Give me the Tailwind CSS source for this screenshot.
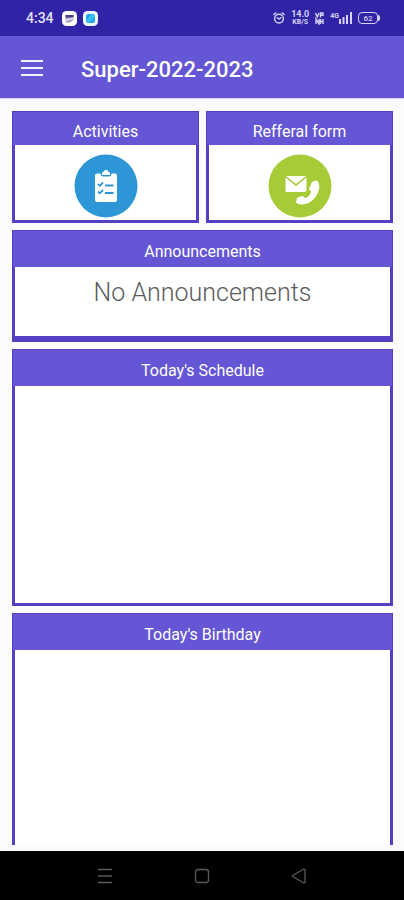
<!DOCTYPE html>
<html lang="en">
<head>
<meta charset="utf-8">
<meta name="viewport" content="width=device-width, initial-scale=1">
<title>Super-2022-2023</title>
<script src="https://cdn.jsdelivr.net/npm/@tailwindcss/browser@4"></script>
</head>
<body class="flex min-h-screen flex-col bg-[#fbfbfd] font-[Roboto,sans-serif] text-white">
  <!-- Status bar -->
  <div class="flex h-9 items-center justify-between bg-[#3023a6] pr-6 pl-[26px]">
    <div class="flex items-center gap-2">
      <span class="w-7 text-[14px] leading-4 font-medium text-[#e4e2f8]">4:34</span>
      <div class="flex gap-1.5">
        <svg class="size-[15px]" viewBox="0 0 15 15" aria-hidden="true"><rect width="15" height="15" rx="4.5" fill="#fff"/><path d="M3.500 4h8v4.500l-3 3h-5z" fill="#a9a5c8"/><path d="M3.500 4h8v2.500h-8z" fill="#4b427f"/><path d="M3.500 9.500l8-2.500" stroke="#fff" stroke-width="1"/></svg>
        <svg class="size-[15px]" viewBox="0 0 15 15" aria-hidden="true"><rect width="15" height="15" rx="4.500" fill="#f2fbff"/><rect x="3" y="3" width="9" height="9" rx="2.500" fill="#20a5ec"/><path d="M3 9l6-6h.5A2.500 2.500 0 0 1 12 5.500L5.500 12A2.500 2.500 0 0 1 3 9.500z" fill="#35c1f5"/></svg>
      </div>
    </div>
    <div class="flex items-center gap-1.5 text-[#d5d2f6]">
      <svg class="size-3" viewBox="0 0 12 12" fill="none" stroke="currentColor" stroke-width="1.400" stroke-linecap="round" aria-hidden="true"><circle cx="6" cy="6.600" r="4.400"/><path d="M.8 2.500 2.800.9M11.200 2.500 9.200.9M4.300 5.700 6 7.200l2-1.500"/></svg>
      <div class="flex w-[18px] flex-col items-center font-bold">
        <span class="text-[9px] leading-[9px]">14.0</span>
        <span class="text-[7px] leading-[7px]">KB/S</span>
      </div>
      <svg class="h-[13px] w-[9px]" viewBox="0 0 9 13" fill="none" stroke="currentColor" stroke-width="1.400" aria-hidden="true"><path d="M.6 1l1.700 4L4 1M5.500 5.500V1h2.500v2.200H5.500M1 12V7l3 5V7M5.500 7v5M8 7v5M5.500 9.500H8"/></svg>
      <div class="flex items-end">
        <span class="self-start text-[7px] leading-[8px] font-bold">4G</span>
        <svg class="h-3 w-[13px]" viewBox="0 0 13 12" fill="currentColor" aria-hidden="true"><path d="M0 7h2v5H0zM3.500 5h2v7h-2zM7 3h2v9H7zM11 0h2v12h-2z"/></svg>
      </div>
      <div class="flex items-center">
        <span class="flex h-3 w-[20px] items-center justify-center rounded border border-[#d5d2f6] text-[8px] leading-[9px] font-medium">62</span>
        <span class="h-1.5 w-0.5 rounded-r bg-[#d5d2f6]"></span>
      </div>
    </div>
  </div>

  <!-- App bar -->
  <header class="flex h-[62px] items-center gap-[38px] bg-[#6456d4] pl-[21px]">
    <button type="button" aria-label="Open menu" class="flex w-[22px] flex-col gap-[5px] pt-1 pb-[3px]">
      <span class="h-[2px] w-full bg-[#f4f3fd]"></span>
      <span class="h-[2px] w-full bg-[#f4f3fd]"></span>
      <span class="h-[2px] w-full bg-[#f4f3fd]"></span>
    </button>
    <h1 class="pt-1.5 text-[22px] leading-7 font-medium">Super-2022-2023</h1>
  </header>
  <div class="h-px bg-[#dcd9f6]"></div>

  <main class="flex flex-1 flex-col gap-[7px] pt-3 pr-[11px] pb-1.5 pl-3">
    <div class="grid grid-cols-2 gap-[7px]">
      <a href="#activities" class="flex h-28 flex-col border-3 border-[#5340c2] bg-white">
        <h2 class="-mx-0.5 -mt-0.5 flex h-[33px] items-center justify-center bg-[#6456d4] pt-1.5 text-base leading-6">Activities</h2>
        <div class="flex flex-1 items-center justify-center pt-1.5">
          <svg class="size-16" viewBox="0 0 64 64" aria-hidden="true">
            <circle cx="32" cy="32" r="31.500" fill="#2d96d6"/>
            <path d="M23 19.500h3.500c0 2 1 3 2.500 3h6c1.500 0 2.500-1 2.500-3H41a2 2 0 0 1 2 2V46a2 2 0 0 1-2 2H23a2 2 0 0 1-2-2V21.500a2 2 0 0 1 2-2z" fill="#fff"/>
            <path d="M28 21v-1.700c0-1 .8-1.500 2-1.500 0-1.300.9-2 2-2s2 .7 2 2c1.200 0 2 .5 2 1.500V21z" fill="#fff"/>
            <path d="M24 30l1.800 1.800L29 28.500M24 37.500l1.800 1.800L29 36M31 31.500h8.500M31 39h8.500" fill="none" stroke="#2d96d6" stroke-width="1.800"/>
          </svg>
        </div>
      </a>
      <a href="#referral" class="flex h-28 flex-col border-3 border-[#5340c2] bg-white">
        <h2 class="-mx-0.5 -mt-0.5 flex h-[33px] items-center justify-center bg-[#6456d4] pt-1.5 text-base leading-6">Refferal form</h2>
        <div class="flex flex-1 items-center justify-center pt-1.5">
          <svg class="size-16" viewBox="0 0 64 64" aria-hidden="true">
            <circle cx="32" cy="32" r="31.500" fill="#a5cb36"/>
            <path d="M17.500 23.500v13a1.500 1.500 0 0 0 1.500 1.500h18l1.500-1.500v-13L28 32z" fill="#fff"/>
            <path d="M18 22h20L28 30z" fill="#fff"/>
            <path d="M44.500 28.500l4.200-1.300c1.800 2.300 2.300 5.500 1.300 8.800-2.500 8-8.500 13-16 13.700-2.200.2-4-.3-5.200-1.400l1-4 4.700-1.500 2.500 2.200c3.500-1.200 6-4 7-7.500l-2.300-2.400z" fill="#fff" stroke="#fff" stroke-width="1.500" stroke-linejoin="round"/>
          </svg>
        </div>
      </a>
    </div>

    <section class="flex h-28 flex-col border-3 border-b-6 border-[#5340c2] bg-white">
      <h2 class="-mx-0.5 -mt-0.5 flex h-9 items-center justify-center bg-[#6456d4] pt-1.5 text-base leading-6">Announcements</h2>
      <p class="pt-2 text-center text-[25px] leading-9 font-light text-[#5c5c5c]">No Announcements</p>
    </section>

    <section class="h-[257px] border-3 border-[#5340c2] bg-white">
      <h2 class="-mx-0.5 -mt-0.5 flex h-9 items-center justify-center bg-[#6456d4] pt-1.5 text-base leading-6">Today's Schedule</h2>
    </section>

    <section class="flex-1 border-3 border-b-0 border-[#5340c2] bg-white">
      <h2 class="-mx-0.5 -mt-0.5 flex h-9 items-center justify-center bg-[#6456d4] pt-1.5 text-base leading-6">Today's Birthday</h2>
    </section>
  </main>

  <!-- System navigation -->
  <nav aria-label="System" class="flex h-[49px] items-center justify-center gap-[81px] bg-black text-[#5a5a5a]">
    <button type="button" aria-label="Recent apps"><svg class="size-4" viewBox="0 0 16 16" fill="none" stroke="currentColor" stroke-width="1.500"><path d="M1 1.500h14M1 8h14M1 14.500h14"/></svg></button>
    <button type="button" aria-label="Home"><svg class="size-4" viewBox="0 0 16 16" fill="none" stroke="currentColor" stroke-width="1.300"><rect x="1.500" y="1.500" width="13" height="13" rx="2.500"/></svg></button>
    <button type="button" aria-label="Back"><svg class="size-4" viewBox="0 0 16 16" fill="none" stroke="currentColor" stroke-width="1.300" stroke-linejoin="round"><path d="M2 7.300 12.500 1.300q1.500-.6 1.500 1v11.400q0 1.600-1.500 1L2 8.700q-1-.7 0-1.400z"/></svg></button>
  </nav>
</body>
</html>
